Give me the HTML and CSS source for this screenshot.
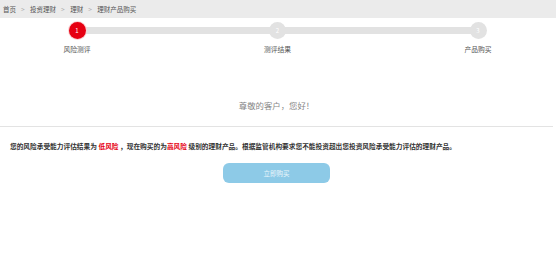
FILE: index.html
```html
<!doctype html>
<html>

<head>
    <meta charset="utf-8" />
    <title>理财产品购买</title>
    <link rel="stylesheet" href="styles.css">
</head>

<body>
    <div id="wrap">
        <!-- 面包屑 -->
        <div class="crumb">
            <a href="javascript:;">首页</a><span class="sep">&gt;</span>
            <a href="javascript:;">投资理财</a><span class="sep">&gt;</span>
            <a href="javascript:;">理财</a><span class="sep">&gt;</span>
            <span class="now">理财产品购买</span>
        </div>

        <!-- 步骤条 -->
        <ul class="steps">
            <li class="current"><i>1</i><span>风险测评</span></li>
            <li><i>2</i><span>测评结果</span></li>
            <li><i>3</i><span>产品购买</span></li>
        </ul>

        <div class="hello">尊敬的客户，您好！</div>

        <p class="tip">您的风险承受能力评估结果为 <em>低风险</em> ，现在购买的为<em>高风险</em> 级别的理财产品。根据监管机构要求您不能投资超出您投资风险承受能力评估的理财产品。</p>

        <div class="btn-box">
            <a href="javascript:;" class="btn">立即购买</a>
        </div>
    </div>
</body>

</html>
```

FILE: styles.css
```css
* {
    margin: 0;
    padding: 0;
}

ul,
li {
    list-style: none;
}

a {
    text-decoration: none;
}

em,
i {
    font-style: normal;
}

body {
    font-family: "Noto Sans CJK SC", "Liberation Sans", sans-serif;
    background: #fff;
    color: #333;
}

#wrap {
    width: 556px;
}

/* 面包屑 */
.crumb {
    height: 18px;
    line-height: 18px;
    background: #ebebeb;
    padding-left: 3px;
    font-size: 6.5px;
    color: #555;
}

.crumb a {
    color: #555;
}

.crumb .sep {
    color: #aaa;
    margin: 0 4px 0 5px;
}

/* 步骤条 */
.steps {
    position: relative;
    display: flex;
    justify-content: space-between;
    width: 461px;
    margin: 4px 0 0 47px;
}

/* 灰色横条,压在圆圈下面 */
.steps::before {
    content: "";
    position: absolute;
    left: 30px;
    right: 30px;
    top: 5px;
    height: 7px;
    background: #e2e2e2;
}

.steps li {
    position: relative;
    width: 60px;
    display: flex;
    flex-direction: column;
    align-items: center;
}

.steps li i {
    width: 17px;
    height: 17px;
    border-radius: 50%;
    background: #e2e2e2;
    color: #fff;
    font-size: 6px;
    line-height: 17px;
    text-align: center;
}

.steps li.current i {
    background: #e60012;
    box-shadow: 0 0 0 1px #fbd3d6;
}

.steps li span {
    margin-top: 6px;
    font-size: 6.8px;
    line-height: 9px;
    color: #555;
}

.hello {
    margin-top: 45px;
    padding-bottom: 15px;
    border-bottom: 1px solid #e3e3e3;
    width: 553px;
    text-align: center;
    font-size: 8.4px;
    line-height: 12px;
    color: #888;
}

.tip {
    margin-top: 15px;
    padding-left: 10px;
    font-size: 6.7px;
    line-height: 9px;
    font-weight: bold;
    color: #333;
    white-space: nowrap;
}

.tip em {
    color: #e60012;
}

.btn-box {
    display: flex;
    margin-top: 12px;
    padding-left: 223px;
}

.btn {
    width: 107px;
    height: 20px;
    line-height: 20px;
    border-radius: 6px;
    background: #8dcae7;
    color: #eaf6fb;
    font-size: 6.5px;
    text-align: center;
}
```
